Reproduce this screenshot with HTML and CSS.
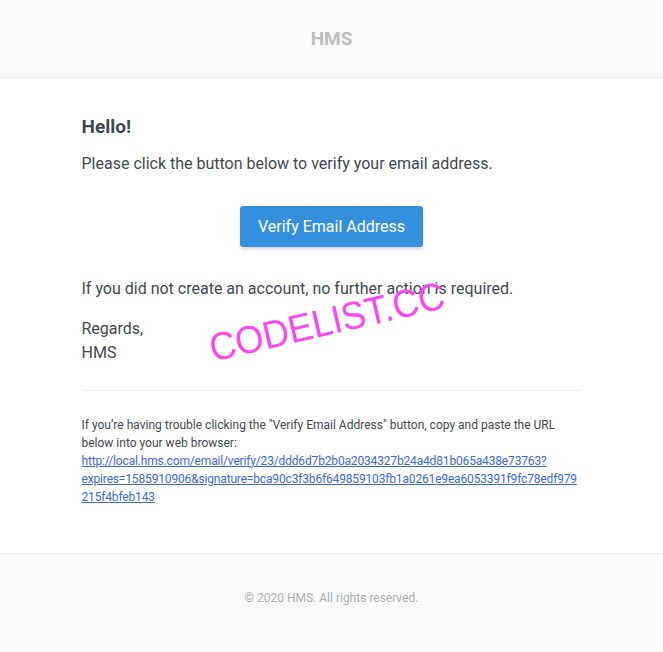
FILE: index.html
```html
<!DOCTYPE html>
<html>
<head>
<meta charset="utf-8">
<title>HMS</title>
<link rel="stylesheet" href="styles.css">
</head>
<body>
<div class="wrapper">
  <div class="header"><a class="brand" href="#">HMS</a></div>
  <div class="mail-body">
    <div class="inner">
      <h1 class="title">Hello!</h1>
      <p class="text">Please click the button below to verify your email address.</p>
      <div class="action"><a class="button" href="#">Verify Email Address</a></div>
      <p class="text">If you did not create an account, no further action is required.</p>
      <p class="text">Regards,<br>HMS</p>
      <div class="subcopy">
        <p class="small">If you’re having trouble clicking the "Verify Email Address" button, copy and paste the URL below into your web browser:<br><a class="url" href="#">http://local.hms.com/email/verify/23/ddd6d7b2b0a2034327b24a4d81b065a438e73763?<br>expires=1585910906&amp;signature=bca90c3f3b6f649859103fb1a0261e9ea6053391f9fc78edf979<br>215f4bfeb143</a></p>
      </div>
    </div>
  </div>
  <div class="footer"><p class="copy">© 2020 HMS. All rights reserved.</p></div>
  <div class="watermark">CODELIST.CC</div>
</div>
</body>
</html>
```
FILE: styles.css
```css
html, body {
  margin: 0;
  padding: 0;
  background: #f8fafc;
}
body {
  font-family: Roboto, "Liberation Sans", Arial, sans-serif;
  color: #3d4852;
}
.wrapper {
  position: relative;
  width: 663px;
  background: #f8fafc;
}
.header {
  padding: 26px 0 24px;
  text-align: center;
  line-height: 26px;
}
.brand {
  color: #bbbfc3;
  font-size: 19px;
  font-weight: bold;
  text-decoration: none;
}
.mail-body {
  background: #fff;
  border-top: 1px solid #edeff2;
  border-bottom: 1px solid #edeff2;
}
.inner {
  width: 500px;
  margin: 0 auto;
  padding: 36px 35px 35px;
  display: flow-root;
}
.title {
  margin: 0 0 12.7px;
  font-size: 19px;
  line-height: 25px;
  font-weight: bold;
  color: #3d4852;
}
.text {
  margin: 0 0 16px;
  font-size: 16px;
  line-height: 24px;
  color: #3d4852;
}
.action {
  margin: 30px 0;
  text-align: center;
}
.button {
  display: inline-block;
  background: #3490dc;
  color: #fff;
  font-size: 16px;
  line-height: 21px;
  padding: 10px 18px;
  border-radius: 3px;
  box-shadow: 0 2px 3px rgba(0, 0, 0, 0.16);
  text-decoration: none;
}
.subcopy {
  margin-top: 25px;
  padding-top: 25px;
  border-top: 1px solid #edeff2;
}
.small {
  margin: 0 0 12px;
  font-size: 12px;
  line-height: 18px;
  color: #3d4852;
}
.url {
  color: #3869d4;
  letter-spacing: -0.16px;
}
.footer {
  width: 500px;
  margin: 0 auto;
  padding: 35px;
  text-align: center;
}
.copy {
  margin: 0 0 11px;
  font-size: 12px;
  line-height: 18px;
  color: #aeaeae;
}
.watermark {
  position: absolute;
  left: 198px;
  top: 302px;
  font-family: "Liberation Sans", Arial, sans-serif;
  font-size: 39px;
  line-height: 40px;
  color: #f649ef;
  transform: rotate(-13deg) scaleX(0.93);
  transform-origin: center;
  white-space: nowrap;
}
```
